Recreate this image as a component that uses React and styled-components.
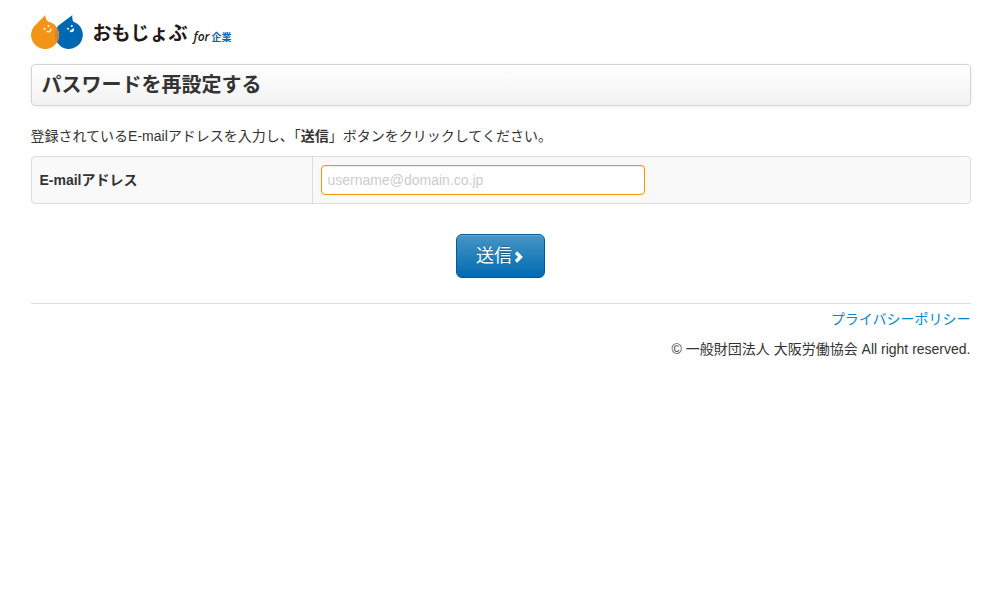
import React from 'react'
import styled, { createGlobalStyle } from 'styled-components'

const GlobalStyle = createGlobalStyle`
  *, *::before, *::after {
    box-sizing: border-box;
  }

  body {
    margin: 0;
    padding-left: 1px;
    background-color: #fff;
    color: #333;
    font-family: "Liberation Sans", "Noto Sans CJK JP", sans-serif;
    font-size: 14px;
    line-height: 20px;
  }
`

const Container = styled.div`
  max-width: 940px;
  margin: 0 auto;

  @media (max-width: 980px) {
    margin: 0 20px;
  }
`

const Brand = styled.a`
  display: inline-flex;
  align-items: center;
  height: 64px;
  color: #231815;
  text-decoration: none;

  svg {
    display: block;
    width: 53px;
    height: 34px;
    margin-right: 9px;
  }
`

const BrandName = styled.span`
  font-family: "Noto Sans CJK JP", sans-serif;
  font-size: 19px;
  font-weight: 700;
`

const BrandFor = styled.span`
  margin: 10px 2px 0 6px;
  font-family: "Open Sans", sans-serif;
  font-size: 12px;
  font-style: italic;
  font-weight: 600;
`

const BrandTarget = styled.span`
  margin-top: 10px;
  color: #0068b3;
  font-family: "Noto Sans CJK JP", sans-serif;
  font-size: 10px;
  font-weight: 700;
`

const Title = styled.h1`
  margin: 0 0 20px;
  padding: 0 10px;
  border: 1px solid #d4d4d4;
  border-radius: 4px;
  background-image: linear-gradient(to bottom, #fff, #f2f2f2);
  box-shadow: 0 1px 4px rgba(0, 0, 0, 0.065);
  font-size: 20px;
  font-weight: 700;
  line-height: 40px;
`

const Lead = styled.p`
  margin: 0 0 10px;
`

const FormTable = styled.table`
  width: 100%;
  margin-bottom: 30px;
  border: 1px solid #ddd;
  border-radius: 4px;
  border-spacing: 0;
  background-color: #f9f9f9;

  th, td {
    padding: 8px;
    vertical-align: middle;
    text-align: left;
  }

  th {
    width: 280px;
  }

  td {
    border-left: 1px solid #ddd;
  }
`

const TextInput = styled.input`
  display: block;
  width: 324px;
  max-width: 100%;
  height: 30px;
  padding: 4px 6px;
  border: 1px solid #f89406;
  border-radius: 4px;
  outline: 0;
  background-color: #fff;
  box-shadow: inset 0 1px 1px rgba(0, 0, 0, 0.075);
  color: #555;
  font-family: inherit;
  font-size: 14px;
  line-height: 20px;

  &::placeholder {
    color: #ccc;
  }
`

const Actions = styled.div`
  display: flex;
  justify-content: center;
  margin-bottom: 25px;
`

const SubmitButton = styled.button`
  display: flex;
  align-items: center;
  gap: 2px;
  height: 44px;
  padding: 0 19px;
  border: 1px solid #005a9b;
  border-radius: 6px;
  background-image: linear-gradient(to bottom, #4795c6, #006ab1);
  box-shadow: inset 0 1px 0 rgba(255, 255, 255, 0.2), 0 1px 2px rgba(0, 0, 0, 0.05);
  color: #fff;
  font-family: inherit;
  font-size: 18px;
  line-height: 20px;
  text-shadow: 0 -1px 0 rgba(0, 0, 0, 0.25);
  cursor: pointer;

  svg {
    display: block;
    margin-top: 2px;
  }
`

const FooterStyled = styled.footer`
  padding-top: 5px;
  border-top: 1px solid #ddd;
  text-align: right;

  p {
    margin: 0 0 10px;
  }

  a {
    color: #0088cc;
    text-decoration: none;
  }
`

const Logo = () => (
  <Brand href="/">
    <svg viewBox="0 0 53 34" aria-hidden="true">
      <path fill="#0068b3" d="M41.500 0 Q40.600 3.500 42.500 6.700 A14 14 0 1 1 27.500 10.500 Z" />
      <path fill="#f19417" d="M14.300 0 Q14 3.500 17 6.400 A14 14 0 1 1 3 11.500 Z" />
      <path fill="#c98538" d="M26 12.700 A14 14 0 0 1 26 27.300 A14 14 0 0 1 26 12.700 Z" />
      <g fill="#fff">
        <circle cx="13.500" cy="14" r="1" />
        <circle cx="17.500" cy="11" r="1" />
        <circle cx="37" cy="13.800" r="1" />
        <circle cx="40.800" cy="11" r="1" />
        <path d="M38.500 16 L43 13 C43.800 17 40.500 18.500 38.500 16 Z" />
      </g>
      <path d="M15.500 16.300 C17.500 17.800 20.500 16.500 19.700 13.300" fill="none" stroke="#fff" strokeWidth="1.200" />
    </svg>
    <BrandName>おもじょぶ</BrandName>
    <BrandFor>for</BrandFor>
    <BrandTarget>企業</BrandTarget>
  </Brand>
)

const App = () => {
  return (
    <>
      <GlobalStyle />
      <Container>
        <Logo />
        <Title>パスワードを再設定する</Title>
        <form onSubmit={e => e.preventDefault()}>
          <Lead>登録されているE-mailアドレスを入力し、「<strong>送信</strong>」ボタンをクリックしてください。</Lead>
          <FormTable>
            <tbody>
              <tr>
                <th scope="row"><label htmlFor="email">E-mailアドレス</label></th>
                <td><TextInput id="email" type="email" placeholder="username@domain.co.jp" /></td>
              </tr>
            </tbody>
          </FormTable>
          <Actions>
            <SubmitButton type="submit">
              送信
              <svg width="11" height="12" viewBox="0 0 11 12" aria-hidden="true">
                <path d="M2 1.500 L6.500 6 L2 10.500" fill="none" stroke="#fff" strokeWidth="3.400" />
              </svg>
            </SubmitButton>
          </Actions>
        </form>
        <FooterStyled>
          <p><a href="/privacy">プライバシーポリシー</a></p>
          <p>© 一般財団法人 大阪労働協会 All right reserved.</p>
        </FooterStyled>
      </Container>
    </>
  )
}

export default App
